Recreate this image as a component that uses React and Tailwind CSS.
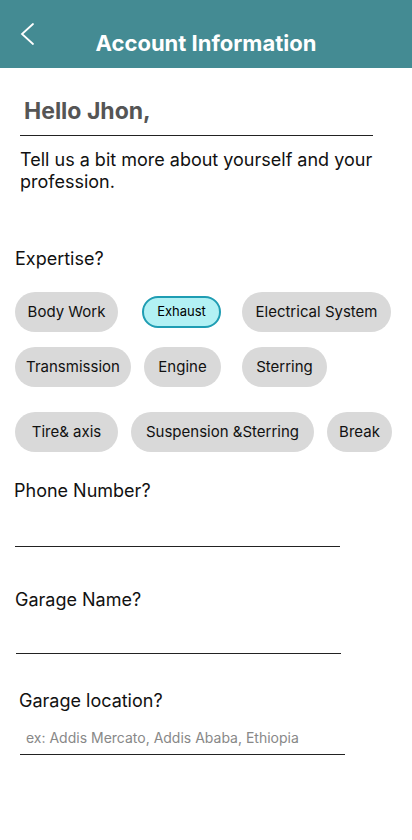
import React from "react";

const Chip = ({ label, w, active }) =>
  active ? (
    <div
      className={`${w} h-[32px] rounded-full border-2 border-[#1f9db3] bg-[#b2f1f4] flex items-center justify-center text-[13px] text-black`}
    >
      {label}
    </div>
  ) : (
    <div
      className={`${w} h-[40px] rounded-full bg-[#d9d9d9] flex items-center justify-center text-[15px] text-[#111]`}
    >
      {label}
    </div>
  );

const Field = ({ label, mt, labelX, lineX, lineW, gap, boxH, placeholder }) => (
  <div className={mt}>
    <div className={`${labelX} text-[18px] text-[#111] leading-[22px]`}>{label}</div>
    <div className={`${gap} ${lineX} ${lineW} ${boxH} border-b border-[#222] flex items-end pb-[6px]`}>
      {placeholder && (
        <span className="pl-[6px] text-[14px] leading-[20px] text-[#888]">{placeholder}</span>
      )}
    </div>
  </div>
);

export default function App() {
  return (
    <div className="w-[412px] h-[840px] bg-white overflow-hidden" style={{ fontFamily: "Inter, 'Noto Sans', sans-serif" }}>
      <div className="h-[68px] bg-[#448b93] flex items-center relative">
        <svg className="absolute left-[18px] top-[22px]" width="18" height="24" viewBox="0 0 18 24">
          <path d="M15 2 L4 12 L15 22" fill="none" stroke="white" strokeWidth="1.8" strokeLinecap="round" />
        </svg>
        <h1 className="w-full text-center text-white font-bold text-[22px] mt-[18px]">
          Account Information
        </h1>
      </div>

      <div className="mt-[29px] ml-[20px] w-[353px] border-b border-[#222] pb-[10px]">
        <div className="pl-[4px] text-[23px] font-bold text-[#555] leading-[28px]">Hello Jhon,</div>
      </div>

      <p className="mt-[13px] ml-[20px] w-[380px] text-[18px] leading-[22px] text-[#111]">
        Tell us a bit more about yourself and your profession.
      </p>

      <div className="mt-[55px] ml-[15px] text-[18px] text-[#111] leading-[22px]">Expertise?</div>

      <div className="mt-[22px] ml-[15px] flex items-center">
        <Chip label="Body Work" w="w-[103px]" />
        <div className="ml-[24px]">
          <Chip label="Exhaust" w="w-[79px]" active />
        </div>
        <div className="ml-[21px]">
          <Chip label="Electrical System" w="w-[149px]" />
        </div>
      </div>
      <div className="mt-[15px] ml-[15px] flex items-center">
        <Chip label="Transmission" w="w-[116px]" />
        <div className="ml-[13px]">
          <Chip label="Engine" w="w-[77px]" />
        </div>
        <div className="ml-[21px]">
          <Chip label="Sterring" w="w-[85px]" />
        </div>
      </div>
      <div className="mt-[25px] ml-[15px] flex items-center gap-[13px]">
        <Chip label="Tire& axis" w="w-[103px]" />
        <Chip label="Suspension &Sterring" w="w-[183px]" />
        <Chip label="Break" w="w-[65px]" />
      </div>

      <Field label="Phone Number?" mt="mt-[28px]" labelX="ml-[14px]" lineX="ml-[15px]" lineW="w-[325px]" gap="mt-[25px]" boxH="h-[20px]" />
      <Field label="Garage Name?" mt="mt-[42px]" labelX="ml-[15px]" lineX="ml-[16px]" lineW="w-[325px]" gap="mt-[23px]" boxH="h-[20px]" />
      <Field
        label="Garage location?"
        mt="mt-[36px]"
        labelX="ml-[19px]"
        lineX="ml-[20px]"
        lineW="w-[325px]"
        gap="mt-[13px]"
        boxH="h-[30px]"
        placeholder="ex: Addis Mercato, Addis Ababa, Ethiopia"
      />
    </div>
  );
}
